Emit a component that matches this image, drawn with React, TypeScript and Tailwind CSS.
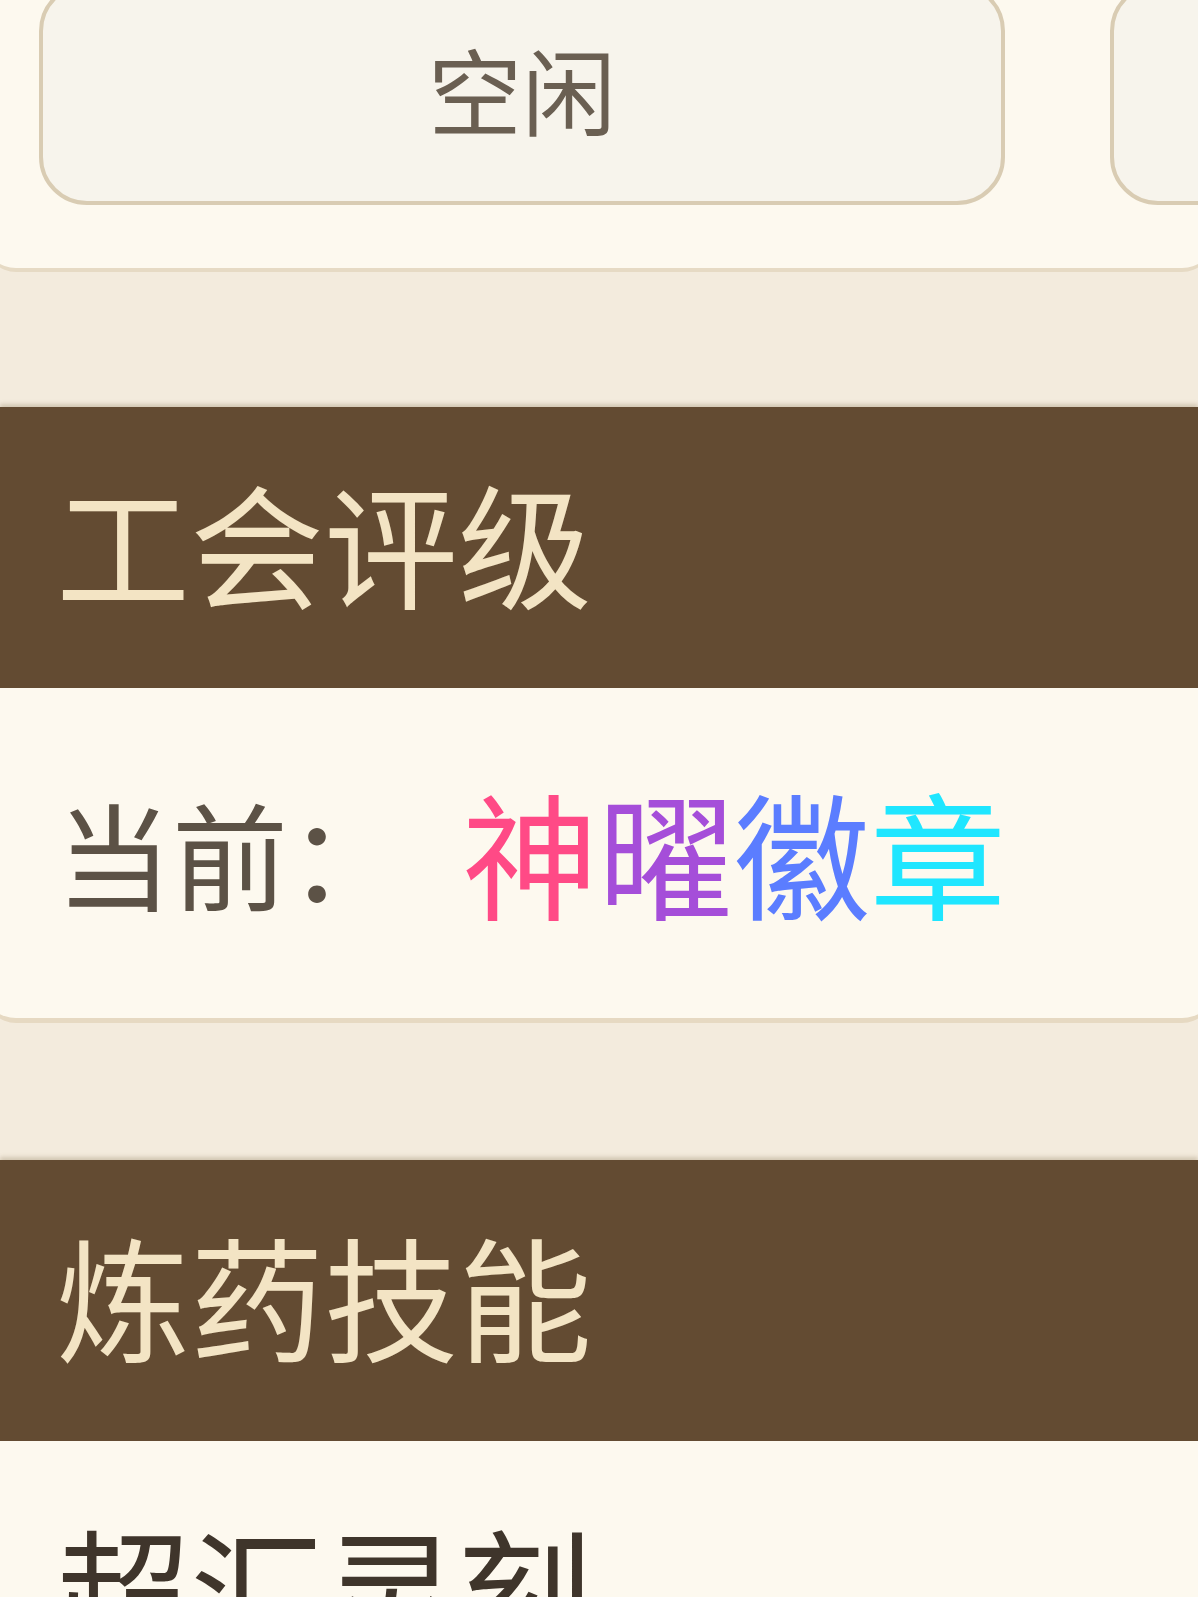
const cjk = "font-['Noto_Sans_CJK_SC','Noto_Sans',sans-serif]";

function Header({ title }: { title: string }) {
  return (
    <div className="flex h-[281px] items-center bg-[#634b32] pb-[14px] pl-[56px] shadow-[0_-3px_4px_rgba(120,95,60,0.25)]">
      <span className="text-[134px] leading-none text-[#f3e4c4]">{title}</span>
    </div>
  );
}

const rankChars = [
  { ch: "神", color: "text-[#ff4a86]" },
  { ch: "曜", color: "text-[#a54ed9]" },
  { ch: "徽", color: "text-[#5b7dff]" },
  { ch: "章", color: "text-[#1fe6ff]" },
];

export default function App() {
  return (
    <div className={`${cjk} min-h-[1597px] overflow-hidden bg-[#f3ebdd]`}>
      {/* status slots */}
      <div className="-ml-[14px] -mt-[60px] w-[calc(100%+28px)] rounded-b-[30px] border-b-[4px] border-[#e6dac4] bg-[#fdf9ef] pb-[63px] pl-[53px] pt-[43px]">
        <div className="flex gap-[105px] overflow-hidden">
          <div className="flex h-[222px] w-[966px] shrink-0 items-center justify-center rounded-[48px] border-[4px] border-[#d9ccb3] bg-[#f7f4ec] pb-[12px]">
            <span className="text-[94px] leading-none text-[#6a5f52]">空闲</span>
          </div>
          <div className="flex h-[222px] w-[966px] shrink-0 items-center justify-center rounded-[48px] border-[4px] border-[#d9ccb3] bg-[#f7f4ec] pb-[12px]">
            <span className="text-[94px] leading-none text-[#6a5f52]">空闲</span>
          </div>
        </div>
      </div>

      <div className="mt-[135px] flex flex-col gap-[137px]">
        <section>
          <Header title="工会评级" />
          <div className="-ml-[14px] flex h-[335px] w-[calc(100%+28px)] items-center rounded-b-[30px] border-b-[5px] border-[#e6d9c2] bg-[#fdf9ef] pb-[5px] pl-[70px]">
            <span className="text-[116px] leading-none text-[#5c5246]">当前：</span>
            <span className="ml-[58px] text-[136px] leading-none">
              {rankChars.map((c) => (
                <span key={c.ch} className={c.color}>
                  {c.ch}
                </span>
              ))}
            </span>
          </div>
        </section>

        <section>
          <Header title="炼药技能" />
          <div className="-ml-[14px] flex h-[335px] w-[calc(100%+28px)] items-start rounded-b-[30px] bg-[#fdf9ef] pl-[70px] pt-[78px]">
            <span className="text-[134px] leading-none text-[#3f352b]">超汇灵刻</span>
          </div>
        </section>
      </div>
    </div>
  );
}
